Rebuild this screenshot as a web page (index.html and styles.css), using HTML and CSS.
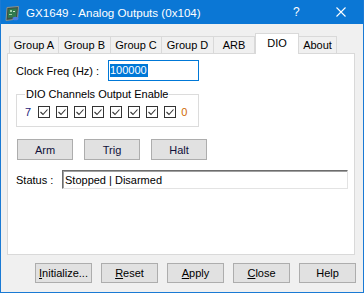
FILE: index.html
```html
<!DOCTYPE html>
<html lang="en">
<head>
    <meta charset="UTF-8">
    <title>GX1649 - Analog Outputs (0x104)</title>
    <link rel="stylesheet" href="styles.css">
</head>
<body>
    <div class="window">
        <!-- Title bar -->
        <div class="titlebar">
            <svg class="app-icon" width="16" height="16" viewBox="0 0 16 16">
                <polygon points="3,1.5 14.5,0.5 13.5,13 2,14.5" fill="#3d4f45" stroke="#8a9490" stroke-width="1"/>
                <polygon points="4.5,3 12.8,2.3 12,11 3.8,12" fill="#2f7a4f"/>
                <rect x="6" y="4" width="2" height="2" fill="#9fd0a8"/>
                <rect x="9" y="5" width="2" height="1" fill="#c8e6c9"/>
                <rect x="5" y="8" width="3" height="1" fill="#9fd0a8"/>
                <ellipse cx="11.5" cy="12.5" rx="3" ry="1.8" fill="#4a7fe0"/>
            </svg>
            <span class="title">GX1649 - Analog Outputs (0x104)</span>
            <span class="help">?</span>
            <svg class="close" width="10" height="10" viewBox="0 0 10 10">
                <path d="M0.5 0.5 L9.5 9.5 M9.5 0.5 L0.5 9.5" stroke="#fff" stroke-width="1.1"/>
            </svg>
        </div>

        <div class="body">
            <!-- Tabs -->
            <div class="tabs">
                <div class="tab tab-a">Group A</div>
                <div class="tab tab-b">Group B</div>
                <div class="tab tab-c">Group C</div>
                <div class="tab tab-d">Group D</div>
                <div class="tab tab-arb">ARB</div>
                <div class="tab tab-dio active">DIO</div>
                <div class="tab tab-about">About</div>
            </div>

            <div class="panel">
                <div class="freq-row">
                    <span class="freq-label">Clock Freq (Hz) :</span>
                    <div class="text-input focused"><span class="selection">100000</span></div>
                </div>

                <fieldset class="group">
                    <legend>DIO Channels Output Enable</legend>
                    <div class="bits">
                        <span class="bit-msb">7</span>
                        <div class="checks"></div>
                        <span class="bit-lsb">0</span>
                    </div>
                </fieldset>

                <div class="actions">
                    <button class="btn">Arm</button>
                    <button class="btn">Trig</button>
                    <button class="btn">Halt</button>
                </div>

                <div class="status-row">
                    <span class="status-label">Status :</span>
                    <div class="status-field">Stopped | Disarmed</div>
                </div>
            </div>

            <div class="footer">
                <button class="btn"><u>I</u>nitialize...</button>
                <button class="btn"><u>R</u>eset</button>
                <button class="btn"><u>A</u>pply</button>
                <button class="btn"><u>C</u>lose</button>
                <button class="btn">Help</button>
            </div>
        </div>
    </div>

    <script>
        // Build the 8 channel checkboxes
        const checks = document.querySelector('.checks');
        for (let i = 0; i < 8; i++) {
            const box = document.createElement('span');
            box.className = 'check';
            box.innerHTML = '<svg width="12" height="12" viewBox="0 0 12 12">' +
                '<rect x="0.5" y="0.5" width="11" height="11" fill="#fff" stroke="#333"/>' +
                '<polyline points="2.5,6 5,8.5 9.5,3.5" fill="none" stroke="#333" stroke-width="1.1"/>' +
                '</svg>';
            checks.appendChild(box);
        }
    </script>
</body>
</html>
```

FILE: styles.css
```css
body {
    margin: 0;
    font-family: 'Liberation Sans', Arial, sans-serif;
    font-size: 11px;
    color: #000;
}

.window {
    width: 364px;
    height: 293px;
    box-sizing: border-box;
    border: 1px solid #1a7ad4;
    border-top: none;
    background-color: #f0f0f0;
    display: flex;
    flex-direction: column;
}

/* Title bar */
.titlebar {
    height: 24px;
    background-color: #0b77d5;
    color: #fff;
    display: flex;
    align-items: center;
    flex-shrink: 0;
}

.app-icon {
    margin-left: 3px;
    margin-top: 4px;
}

.title {
    margin-left: 6px;
    font-size: 11.6px;
    flex: 1;
}

.help {
    font-size: 12px;
    width: 43px;
}

.close {
    margin-right: 17px;
}

.body {
    padding: 0 8px 0 6px;
    display: flex;
    flex-direction: column;
}

/* Tabs */
.tabs {
    display: flex;
    align-items: flex-end;
    height: 20px;
    margin-top: 9px;
    padding-left: 2px;
}

.tab {
    height: 17px;
    box-sizing: border-box;
    border: 1px solid #d9d9d9;
    border-bottom: none;
    border-left: none;
    background-color: #f0f0f0;
    display: flex;
    align-items: center;
    justify-content: center;
}

.tab-a { width: 50px; border-left: 1px solid #d9d9d9; }
.tab-b { width: 52px; }
.tab-c { width: 51px; }
.tab-d { width: 52px; }
.tab-arb { width: 41px; }
.tab-about { width: 38px; }

.tab.active {
    width: 44px;
    height: 21px;
    margin-bottom: -1px;
    border-left: 1px solid #d9d9d9;
    background-color: #fff;
    position: relative;
    z-index: 1;
    align-items: flex-start;
    padding-top: 3px;
}

.panel {
    height: 202px;
    box-sizing: border-box;
    border: 1px solid #d9d9d9;
    background-color: #fff;
    padding: 6px 6px 0 8px;
}

.freq-row {
    display: flex;
    align-items: center;
}

.freq-label {
    width: 92px;
}

.text-input {
    width: 91px;
    height: 21px;
    box-sizing: border-box;
    border: 1px solid #7a7a7a;
    padding-left: 1px;
    display: flex;
    align-items: center;
}

.text-input.focused {
    border-color: #0078d7;
}

.selection {
    background-color: #0078d7;
    color: #fff;
    line-height: 13px;
    padding-right: 1px;
}

/* Group box */
.group {
    width: 183px;
    box-sizing: border-box;
    margin: 7px 0 0 0;
    padding: 5px 8px 8px 8px;
    border: 1px solid #dcdcdc;
}

.group legend {
    padding: 0 1px;
    line-height: 13px;
}

.bits {
    display: flex;
    align-items: center;
    height: 12px;
}

.bit-msb {
    color: #1a1a7a;
    margin-right: 7px;
}

.checks {
    display: flex;
    gap: 6px;
}

.check {
    display: flex;
}

.bit-lsb {
    color: #d06a00;
    margin-left: 5px;
}

/* Buttons */
.btn {
    font-family: inherit;
    font-size: 11px;
    color: #000;
    height: 21px;
    padding: 0;
    background-color: #e1e1e1;
    border: 1px solid #adadad;
}

.actions {
    display: flex;
    gap: 11px;
    margin: 12px 0 0 1px;
}

.actions .btn {
    width: 56px;
    color: #10103a;
}

.status-row {
    display: flex;
    align-items: center;
    margin-top: 10px;
}

.status-label {
    width: 46px;
}

.status-field {
    flex: 1;
    height: 19px;
    box-sizing: border-box;
    border: 1px solid #e3e3e3;
    border-top-color: #6d6d6d;
    border-left-color: #6d6d6d;
    box-shadow: inset 1px 1px 0 #a0a0a0;
    padding-left: 2px;
    display: flex;
    align-items: center;
}

.footer {
    display: flex;
    justify-content: flex-end;
    gap: 9px;
    margin-top: 8px;
    margin-right: -1px;
}

.footer .btn {
    width: 57px;
    height: 20px;
}
```
